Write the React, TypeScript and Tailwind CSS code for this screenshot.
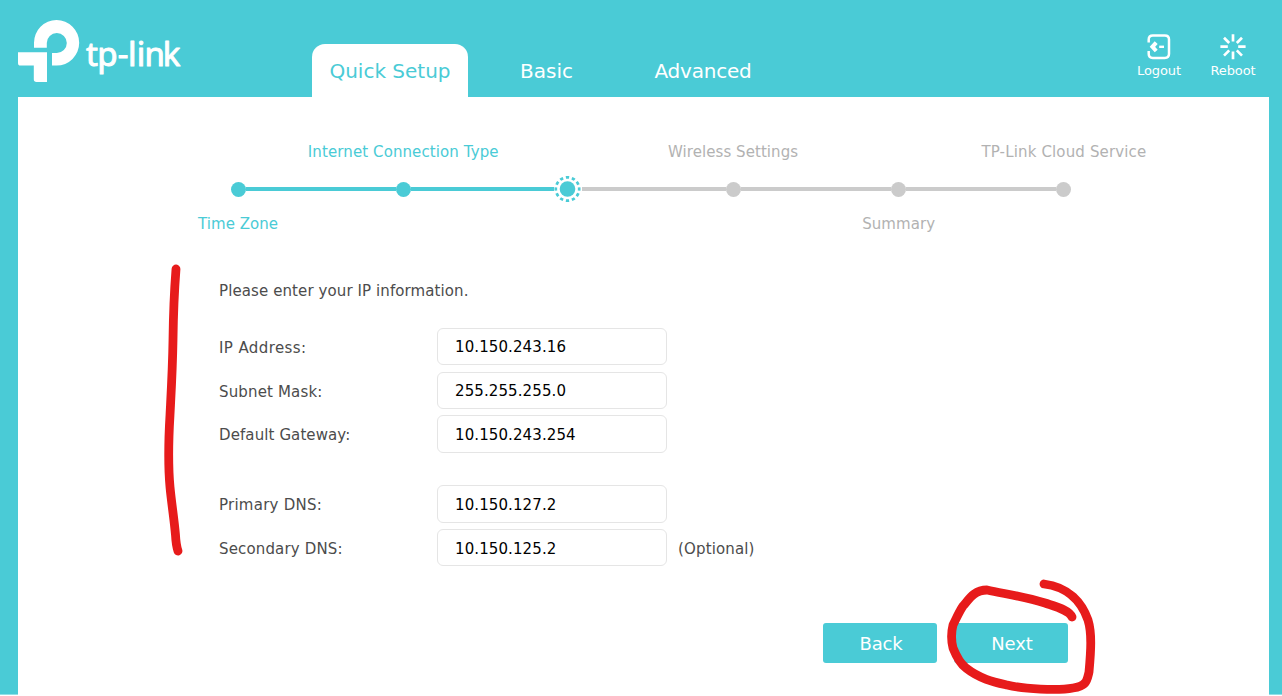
import React from "react";

const steps = [
  { label: "Time Zone", place: "bottom", state: "done", spacing: "tracking-[0.05px]" },
  { label: "Internet Connection Type", place: "top", state: "done", spacing: "tracking-[0.1px]" },
  { label: "", place: "top", state: "current", spacing: "" },
  { label: "Wireless Settings", place: "top", state: "todo", spacing: "tracking-[0.06px] pr-px" },
  { label: "Summary", place: "bottom", state: "todo", spacing: "tracking-[0.1px]" },
  { label: "TP-Link Cloud Service", place: "top", state: "todo", spacing: "tracking-[0.15px]" },
];

const fields = [
  { label: "IP Address:", value: "10.150.243.16", row: "h-[37px]", gap: "mt-[25px]", spacing: "tracking-[0.4px]", shift: "pt-[3px]", inset: "pt-[2px]" },
  { label: "Subnet Mask:", value: "255.255.255.0", row: "h-[37px]", gap: "mt-[7px]", spacing: "tracking-[0.15px]", shift: "pt-[3px]", inset: "pt-px" },
  { label: "Default Gateway:", value: "10.150.243.254", row: "h-[38px]", gap: "mt-[6px]", spacing: "tracking-[0.1px]", shift: "pt-[2px]", inset: "pt-[2px]" },
  { label: "Primary DNS:", value: "10.150.127.2", row: "h-[38px]", gap: "mt-[32px]", spacing: "tracking-[0.25px]", shift: "pt-[2px]", inset: "pt-[2px]" },
  { label: "Secondary DNS:", value: "10.150.125.2", row: "h-[37px]", gap: "mt-[6px]", spacing: "tracking-[0.15px]", shift: "pt-[3px]", inset: "pt-[3px]", note: "(Optional)" },
];

function Logo() {
  return (
    <svg className="mt-5 ml-[18px] h-[63px] w-[166px] shrink-0" viewBox="18 20 166 63" fill="white">
      <path d="M34 47.7V43A22.6 22.8 0 1 1 56.5 65.6H52V53H56.8A10 10 0 1 0 46.8 43V47.7Z" />
      <path d="M18 52.3H47V82H36.5Q33.8 82 33.8 79.3V65.6H20.5Q18 65.6 18 63Z" />
      <text x="86 97.3 117.7 128 136.8 144.5 162.8" y="66.3" fontFamily="'Noto Sans', sans-serif" fontSize="33" stroke="white" strokeWidth="1" strokeLinejoin="round">tp-link</text>
    </svg>
  );
}

function LogoutIcon() {
  return (
    <svg className="h-[28px] w-[28px]" viewBox="0 0 28 28" fill="none" stroke="white" strokeWidth="2.5">
      <path d="M3.7 9.5V6.5Q3.7 2.4 7.8 2.4H19.8Q24 2.4 24 6.5V20.8Q24 25 19.8 25H7.8Q3.7 25 3.7 20.8V18" />
      <path d="M11.2 9.6L7.4 13.8L11.2 18" strokeWidth="4" />
      <path d="M14.2 13.8H19" strokeWidth="2.4" />
    </svg>
  );
}

function RebootIcon() {
  return (
    <svg className="h-[28px] w-[28px]" viewBox="0 0 28 28" fill="none" stroke="white" strokeWidth="2.7">
      <path d="M14 1.2V8.6M14 18.6V26.2M1.4 13.7H8.8M19.2 13.7H26.6M5 4.8L10.2 10M17.8 17.4L23 22.6M23 4.8L17.8 10M10.2 17.4L5 22.6" />
    </svg>
  );
}

function StepDot({ state }: { state: string }) {
  if (state === "current") {
    return (
      <svg className="h-[28px] w-[28px] shrink-0" viewBox="0 0 28 28">
        <circle cx="13.500" cy="14" r="7.8" fill="#4acbd6" />
        <circle cx="13.500" cy="14" r="11.7" fill="none" stroke="#4acbd6" strokeWidth="2.7" pathLength="72" strokeDasharray="3.3 2.7" strokeDashoffset="1.65" />
      </svg>
    );
  }
  return <span className={`h-[15px] w-[15px] shrink-0 rounded-full ${state === "done" ? "bg-[#4acbd6]" : "bg-[#cbcbcb]"}`} />;
}

export default function App() {
  return (
    <div className="relative h-[696px] w-[1282px] overflow-hidden bg-white font-['DejaVu_Sans',sans-serif] text-[15px] text-[#4c4c4c]">
      <div className="flex h-[694px] flex-col bg-[#4acbd6]">
        <header className="flex h-[97px] shrink-0 text-white">
          <Logo />
          <nav className="ml-[128px] flex items-end text-[20px]">
            <a className="flex h-[53px] w-[156px] items-center justify-center whitespace-nowrap rounded-t-[13px] bg-white text-[#4acbd6]">Quick Setup</a>
            <a className="flex h-[53px] w-[157px] items-center justify-center">Basic</a>
            <a className="flex h-[53px] w-[156px] items-center justify-center tracking-[-0.2px]">Advanced</a>
          </nav>
          <div className="ml-auto flex pt-[33px] text-[13px] leading-[20px] tracking-[-0.1px]">
            <a className="flex w-[74px] flex-col items-center"><LogoutIcon />Logout</a>
            <a className="mr-[12px] flex w-[74px] flex-col items-center"><RebootIcon />Reboot</a>
          </div>
        </header>
        <main className="mr-[13px] ml-[18px] flex-1 bg-white">
          <div className="ml-[137.5px] grid w-[991px] grid-cols-6 pt-[43px]">
            {steps.map((s, i) => (
              <div key={i} className={`flex flex-col items-center ${s.state === "todo" ? "text-[#b2b2b2]" : "text-[#4acbd6]"}`}>
                <div className={`h-6 leading-6 whitespace-nowrap ${s.spacing}`}>{s.place === "top" && s.label}</div>
                <div className="mt-[11px] flex h-[28px] w-full items-center">
                  <span className={`h-1 flex-1 ${i === 0 ? "" : i < 3 ? "bg-[#4acbd6]" : "bg-[#cbcbcb]"}`} />
                  <StepDot state={s.state} />
                  <span className={`h-1 flex-1 ${i === 5 ? "" : i < 2 ? "bg-[#4acbd6]" : "bg-[#cbcbcb]"}`} />
                </div>
                <div className={`mt-[9px] h-6 leading-6 whitespace-nowrap ${s.spacing}`}>{s.place === "bottom" && s.label}</div>
              </div>
            ))}
          </div>
          <section className="ml-[201px] pt-[43px]">
            <p className="h-6 leading-6 tracking-[0.1px]">Please enter your IP information.</p>
            {fields.map((f) => (
              <div key={f.label} className={`flex items-center ${f.row} ${f.gap}`}>
                <label className={`w-[218px] whitespace-nowrap ${f.spacing} ${f.shift}`}>{f.label}</label>
                <div className={`flex h-full w-[230px] items-center rounded-[6px] border border-[#e5e5e5] pl-[17px] tracking-[0.1px] text-black ${f.inset}`}>{f.value}</div>
                {f.note && <span className="ml-[11px] pt-[3px] tracking-[0.15px]">{f.note}</span>}
              </div>
            ))}
            <div className="mt-[57px] ml-[604px] flex gap-[17px] text-[18px] text-white">
              <button className="h-10 w-[114px] rounded-[3px] bg-[#4acbd6] pl-[2px] tracking-[-0.2px]">Back</button>
              <button className="h-10 w-[114px] rounded-[3px] bg-[#4acbd6] pl-[2px] tracking-[-0.1px]">Next</button>
            </div>
          </section>
        </main>
      </div>
      <div className="h-px bg-[#91e0e7]"><div className="mr-[13px] ml-[18px] h-px bg-white" /></div>
      <svg className="pointer-events-none absolute inset-0 h-[696px] w-[1282px]" viewBox="0 0 1282 696" fill="none" stroke="#e71b1b" strokeWidth="8.8" strokeLinecap="round" strokeLinejoin="round">
        <path d="M176 269C174 295 173.300 315 173 340C172.500 370 171 395 170 415C168.500 440 168 465 170 487C171.500 503 174 518 175.500 535Q176 545 178 551" />
        <path d="M1072 617C1069 610 1057 607 1045 603C1023 596 1005 594 987 590C973 590 968 601 963 606C959 612 957 617 953 625C951 633 951 640 953 648C957 658 962 665 966 668C980 679 994 682 1007 685C1023 689 1058 691 1073 688C1087 686 1087 680 1089 672C1091 650 1092 633 1088 620C1082 603 1069 587 1044 584" />
      </svg>
    </div>
  );
}
